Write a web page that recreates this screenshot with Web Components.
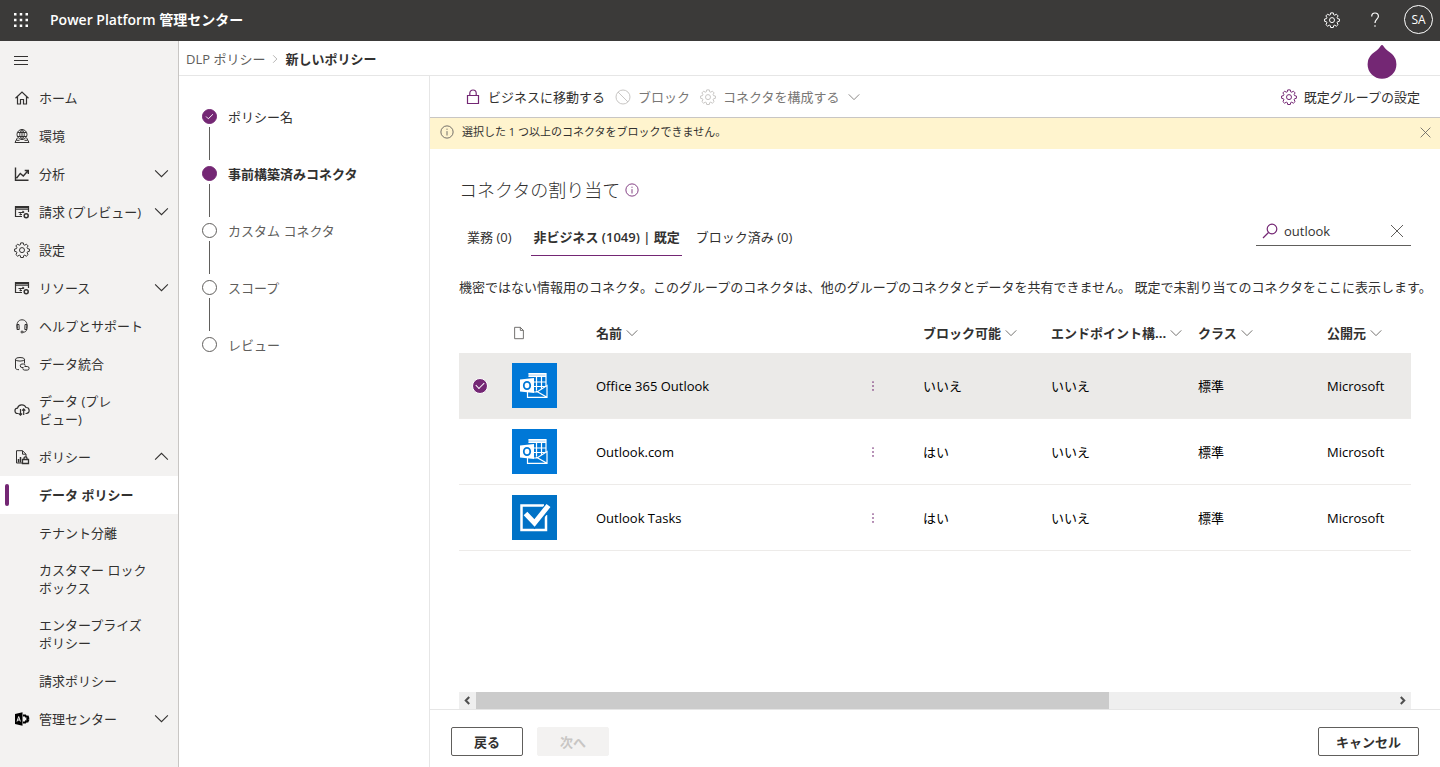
<!DOCTYPE html>
<html lang="ja">
<head>
<meta charset="utf-8">
<meta name="viewport" content="width=device-width, initial-scale=1">
<title>Power Platform 管理センター</title>
<style>
  html, body { margin: 0; height: 100%; }
  body {
    font: 13px/18px "Open Sans", "Noto Sans CJK JP", sans-serif;
    color: #323130; background: #fff;
    --accent: #742774; --dark: #3b3a39; --nav: #f3f2f1; --line: #e6e6e6;
  }
</style>
</head>
<body>
<admin-app></admin-app>
<script>
const ICONS = {
  waffle: '<g fill="currentColor" stroke="none"><path d="M1 1h2.500v2.500H1zM6.750 1h2.500v2.500h-2.500zM12.500 1H15v2.500h-2.500zM1 6.750h2.500v2.500H1zM6.750 6.750h2.500v2.500h-2.500zM12.500 6.750H15v2.500h-2.500zM1 12.500h2.500V15H1zM6.750 12.500h2.500V15h-2.500zM12.500 12.500H15V15h-2.500z"/></g>',
  menu: '<path d="M1 4.500h14M1 8.500h14M1 12.500h14"/>',
  home: '<path d="M1.500 8.300 8 2l6.500 6.300M3.500 6.800v7.200h3V9.500h3V14h3V6.800" stroke-width="1.200"/>',
  globe: '<circle cx="8" cy="6.500" r="5"/><path d="M8 1.500c-3 2.500-3 7.500 0 10M8 1.500c3 2.500 3 7.500 0 10M3.500 4.500h9M3.200 8.500h9.600M8 1.500v10M3.300 10 1 14.500h14L12.700 10M2.500 12.300h3M10.500 12.300h3"/>',
  chart: '<path d="M1.500 1.500v12.700h13M2.500 12.200l3.800-4.800 3 2.600L14 4.800M10.700 4.500h3.600v3.600" stroke-width="1.400"/>',
  panel: '<path d="M8 12.500H1.500v-10h13V8M1.500 5.200h13M1.500 3.500h13" stroke-width="1.200"/><path d="M4.500 8.500h5.500M8.500 7l1.600 1.500M8 10.500H5.500M6.500 9.300v2" stroke-width="1.200"/><circle cx="12.200" cy="11.800" r="2" stroke-width="1.500"/>',
  gear: '<path d="M6.700.900h2.600l.4 1.900 1 .4 1.700-1 1.700 1.700-1 1.700.4 1 1.900.4v2.300l-1.900.5-.4 1 1 1.700-1.700 1.700-1.700-1-1 .4-.4 1.900H6.700l-.4-1.900-1-.4-1.700 1-1.700-1.700 1-1.700-.4-1-1.900-.5V7l1.900-.4.4-1-1-1.700 1.700-1.700 1.700 1 1-.4z"/><circle cx="8" cy="8.100" r="2.500"/>',
  headset: '<path d="M3.500 10.500C2 5.500 4 1.800 8 1.800s6 3.700 4.500 8.700M5 6.500H3v5h2.200zM11 6.500h2v5h-2.200zM12.500 11.500c0 2-1.500 2.700-3.500 2.700"/><circle cx="8" cy="14" r="1"/>',
  database: '<ellipse cx="6" cy="3.300" rx="4.500" ry="1.800"/><path d="M1.500 3.300v8.900c0 .8 1.500 1.500 3.500 1.500M10.500 3.300V7.500M9.500 11.500H8a1.700 1.700 0 0 1 0-3.500h1.500a1.700 1.700 0 0 1 1.700 1.700M10.500 10.500h2.800a1.800 1.800 0 0 1 0 3.600h-2.800a1.800 1.800 0 0 1-1.700-1.800"/>',
  cloud: '<path d="M4.500 11.500H3.800a2.700 2.700 0 0 1-.3-5.400A4.600 4.600 0 0 1 12 5.500a3 3 0 0 1 .3 6h-.8M6.500 7v6M4.800 11.500l1.700 1.700 1.600-1.700M9.700 13V7M8.100 8.700 9.700 7l1.600 1.700" stroke-width="1.200"/>',
  policy: '<path d="M8 14H2.500V1.700h6L12 5.200V8M8.500 1.700v3.500H12"/><path d="M4.500 13.500V10M6.500 13.500V8" stroke-width="1.500"/><path d="M8.500 10.500h6v4h-6zM10 10.500V9.300a1.500 1.500 0 0 1 3 0v1.200" stroke-width="1.300"/>',
  admin: '<path d="M1 3l7.500-1.800v13.600L1 13z" fill="#000" stroke="none"/><path d="m3 10.500 1.700-5 1.700 5M3.600 9h2.200" stroke="#f3f2f1"/><path d="M9 4.500h2.300l.8 1.300 1.700-.2.500 1.500-1 .9 1 1-.7 1.400-1.500-.2-.8 1.300H9" stroke="#000" stroke-width="2"/>',
  down: '<path d="m2 5 6 6 6-6"/>',
  up: '<path d="m2 11 6-6 6 6"/>',
  right: '<path d="m5 2 6 6-6 6"/>',
  close: '<path d="m2 2 12 12M14 2 2 14"/>',
  help: '<path d="M4.700 4.500C4.700 2.300 6.200 1 8 1s3.400 1.200 3.400 3.300C11.400 7 8 7.500 8 11M8 13.300v1.400" stroke-width="1.200"/>',
  lock: '<path d="M2.500 6.500h11v8h-11zM4.800 6.500V4.200a3.200 3.200 0 0 1 6.400 0v2.300" stroke-width="1.200"/>',
  block: '<circle cx="8" cy="8" r="7"/><path d="m3 3 10 10"/>',
  info: '<circle cx="8" cy="8" r="7"/><path d="M8 7v5M8 4.200v1.300"/>',
  search: '<circle cx="10" cy="6" r="4.800" stroke-width="1.200"/><path d="M6.500 9.500 1 15" stroke-width="1.200"/>',
  page: '<path d="M3 1.500h6.500L13 5v9.500H3zM9.500 1.500V5H13"/>',
  more: '<path d="M7.500 3h1v1h-1zM7.500 7.500h1v1h-1zM7.500 12h1v1h-1z" stroke-width=".5" fill="currentColor"/>',
  check: '<path d="m3 8 3.300 3.300L13 4.700" stroke-width="1.400"/>',
  thumbleft: '<path d="M10.500 3 5.500 8l5 5" stroke-width="3"/>',
  thumbright: '<path d="m5.500 3 5 5-5 5" stroke-width="3"/>'
};

class BaseElement extends HTMLElement {
  constructor() { super(); this.attachShadow({ mode: 'open' }); }
  connectedCallback() {
    this.shadowRoot.innerHTML = `<style>
      * { box-sizing: border-box; }
      a { color: inherit; text-decoration: none; }
      button, input { font: inherit; color: inherit; margin: 0; padding: 0; border: 0; background: none; }
      ul, ol { list-style: none; margin: 0; padding: 0; }
      ${this.css()}</style>${this.html()}`;
  }
}
const attr = (el, name) => el.getAttribute(name) || '';

customElements.define('ui-icon', class extends BaseElement {
  css() { return `:host { display: inline-flex; flex: none; width: 16px; height: 16px; }
    svg { display: block; width: 100%; height: 100%; fill: none; stroke: currentColor; }`; }
  html() { return `<svg viewBox="0 0 16 16" aria-hidden="true">${ICONS[attr(this, 'name')]}</svg>`; }
});

customElements.define('app-header', class extends BaseElement {
  css() { return `
    :host { display: block; background: var(--dark); color: #fff; }
    header { display: flex; align-items: center; height: 41px; padding: 0 7px 2px 13px; }
    .waffle { display: flex; margin-right: 21px; }
    h1 { flex: 1; margin: 0; font-size: 14px; font-weight: 600; line-height: 20px; }
    .tools { display: flex; align-items: center; gap: 27px; }
    .tools button { display: flex; }
    .tools .me { width: 29px; height: 29px; margin-left: -6px; border: 1px solid #fff; border-radius: 50%;
      align-items: center; justify-content: center; font-size: 12px; }`; }
  html() { return `<header>
    <button class="waffle" aria-label="アプリ起動ツール"><ui-icon name="waffle"></ui-icon></button>
    <h1>Power Platform 管理センター</h1>
    <div class="tools">
      <button aria-label="設定"><ui-icon name="gear"></ui-icon></button>
      <button aria-label="ヘルプ"><ui-icon name="help"></ui-icon></button>
      <button class="me">SA</button>
    </div></header>`; }
});

customElements.define('nav-item', class extends BaseElement {
  css() { return `
    :host { display: block; }
    a { display: flex; align-items: center; min-height: 38px; padding: 9px 8px 10px 14px; position: relative; }
    .icon { width: 16px; margin-right: 9px; display: flex; }
    .label { flex: 1; white-space: nowrap; }
    .chev { width: 17px; height: 17px; }
    :host([current]) a { background: #fff; font-weight: 700; }
    :host([current]) a::before { content: ""; position: absolute; left: 5px; top: 8px; width: 4px; height: 22px;
      border-radius: 2px; background: var(--accent); }`; }
  html() {
    const i = attr(this, 'icon'), c = attr(this, 'chevron');
    return `<a href="#"><span class="icon">${i ? `<ui-icon name="${i}"></ui-icon>` : ''}</span>
      <span class="label"><slot></slot></span>${c ? `<ui-icon class="chev" name="${c}"></ui-icon>` : ''}</a>`;
  }
});

customElements.define('side-nav', class extends BaseElement {
  css() { return `
    :host { display: block; background: var(--nav); border-right: 1px solid #c8c6c4; }
    button { display: flex; align-items: center; height: 38px; padding-left: 13px; }`; }
  html() { return `<nav aria-label="メイン">
    <button aria-label="メニュー"><ui-icon name="menu"></ui-icon></button>
    <nav-item icon="home">ホーム</nav-item>
    <nav-item icon="globe">環境</nav-item>
    <nav-item icon="chart" chevron="down">分析</nav-item>
    <nav-item icon="panel" chevron="down">請求 (プレビュー)</nav-item>
    <nav-item icon="gear">設定</nav-item>
    <nav-item icon="panel" chevron="down">リソース</nav-item>
    <nav-item icon="headset">ヘルプとサポート</nav-item>
    <nav-item icon="database">データ統合</nav-item>
    <nav-item icon="cloud">データ (プレ<br>ビュー)</nav-item>
    <nav-item icon="policy" chevron="up">ポリシー</nav-item>
    <nav-item current>データ ポリシー</nav-item>
    <nav-item>テナント分離</nav-item>
    <nav-item>カスタマー ロック<br>ボックス</nav-item>
    <nav-item>エンタープライズ<br>ポリシー</nav-item>
    <nav-item>請求ポリシー</nav-item>
    <nav-item icon="admin" chevron="down">管理センター</nav-item></nav>`; }
});

customElements.define('crumb-bar', class extends BaseElement {
  css() { return `
    :host { display: block; border-bottom: 1px solid var(--line); position: relative; }
    nav { display: flex; align-items: center; gap: 5px; height: 34px; padding: 2px 7px 0; }
    a { color: #605e5c; }
    ui-icon { width: 10px; height: 10px; color: #8a8886; }
    strong { font-weight: 700; }
    svg { position: absolute; right: 43px; top: 4px; width: 30px; height: 35px; fill: var(--accent); z-index: 1; }`; }
  html() { return `<nav aria-label="階層"><a href="#">DLP ポリシー</a><ui-icon name="right"></ui-icon>
    <strong>新しいポリシー</strong></nav>
    <svg viewBox="0 0 30 35" aria-hidden="true"><path d="M15 0c1 0 2 2 3.500 3.700 2 2.200 4.500 3.300 6.500 5.300a14.400 14.400 0 1 1-20 0c2-2 4.500-3.100 6.500-5.300C13 2 14 0 15 0z"/></svg>`; }
});

customElements.define('wizard-step', class extends BaseElement {
  css() { return `
    :host { display: flex; height: 57px; color: #605e5c; }
    .track { display: flex; flex-direction: column; align-items: center; gap: 3px; width: 15px; margin-right: 11px; padding-top: 1px; }
    .dot { width: 15px; height: 15px; border-radius: 50%; border: 1px solid #605e5c; display: flex; flex: none;
      align-items: center; justify-content: center; color: #fff; }
    .dot ui-icon { width: 11px; height: 11px; }
    .line { width: 1px; height: 33px; background: #605e5c; }
    :host(:last-of-type) .line { display: none; }
    :host([state]) { color: #323130; }
    :host([state]) .dot { background: var(--accent); border-color: var(--accent); }
    :host([state=current]) .label { font-weight: 700; }`; }
  html() { return `<div class="track"><span class="dot">${attr(this, 'state') === 'done' ? '<ui-icon name="check"></ui-icon>' : ''}</span>
    <span class="line"></span></div><span class="label"><slot></slot></span>`; }
});

customElements.define('wizard-steps', class extends BaseElement {
  css() { return `:host { display: block; padding: 32px 23px; border-right: 1px solid var(--line); }`; }
  html() { return `<wizard-step state="done">ポリシー名</wizard-step>
    <wizard-step state="current">事前構築済みコネクタ</wizard-step>
    <wizard-step>カスタム コネクタ</wizard-step>
    <wizard-step>スコープ</wizard-step>
    <wizard-step>レビュー</wizard-step>`; }
});

customElements.define('command-bar', class extends BaseElement {
  css() { return `
    :host { display: flex; align-items: center; gap: 10px; height: 42px; padding: 0 20px 0 35px; border-bottom: 1px solid #c8c6c4; }
    button { display: flex; align-items: center; gap: 7px; white-space: nowrap; }
    ui-icon { width: 16px; height: 16px; }
    .on ui-icon { color: var(--accent); }
    button:disabled { color: #797775; }
    button:disabled ui-icon:first-child { color: #c8c6c4; }
    button .chev { width: 14px; height: 14px; }
    .end { margin-left: auto; }`; }
  html() { return `<button class="on"><ui-icon name="lock"></ui-icon>ビジネスに移動する</button>
    <button disabled><ui-icon name="block"></ui-icon>ブロック</button>
    <button disabled><ui-icon name="gear"></ui-icon>コネクタを構成する<ui-icon class="chev" name="down"></ui-icon></button>
    <button class="on end"><ui-icon name="gear"></ui-icon>既定グループの設定</button>`; }
});

customElements.define('message-bar', class extends BaseElement {
  css() { return `
    :host { display: flex; align-items: center; gap: 8px; height: 31px; padding: 0 8px 3px 10px; background: #fff4ce; font-size: 11px; }
    ui-icon { width: 14px; height: 14px; color: #605e5c; }
    span { flex: 1; }
    button { display: flex; }
    button ui-icon { width: 13px; height: 13px; }`; }
  html() { return `<ui-icon name="info"></ui-icon><span><slot></slot></span>
    <button aria-label="閉じる"><ui-icon name="close"></ui-icon></button>`; }
});

customElements.define('group-tabs', class extends BaseElement {
  css() { return `
    :host { display: flex; justify-content: space-between; align-items: flex-start; }
    .tabs { display: flex; gap: 12px; }
    .tabs button { height: 37px; padding: 0 2px; border-bottom: 1px solid transparent; white-space: nowrap; }
    .tabs button:first-child { padding: 0 8px; }
    .tabs button[aria-selected=true] { font-weight: 600; border-color: var(--accent); }
    label { display: flex; align-items: center; gap: 6px; width: 155px; height: 27px; padding: 0 6px 2px;
      border-bottom: 1px solid #605e5c; }
    label ui-icon { width: 16px; height: 16px; color: var(--accent); }
    input { flex: 1; min-width: 0; outline: 0; height: 20px; }
    label button { display: flex; }
    label button ui-icon { color: #605e5c; }`; }
  html() { return `<div class="tabs" role="tablist">
      <button role="tab">業務 (0)</button>
      <button role="tab" aria-selected="true">非ビジネス (1049) | 既定</button>
      <button role="tab">ブロック済み (0)</button></div>
    <label><ui-icon name="search"></ui-icon><input type="text" value="outlook" aria-label="検索">
      <button aria-label="クリア"><ui-icon name="close"></ui-icon></button></label>`; }
});

customElements.define('connector-logo', class extends BaseElement {
  css() { return `:host { display: block; width: 45px; height: 45px; } svg { display: block; width: 100%; height: 100%; }`; }
  html() {
    return attr(this, 'kind') === 'tasks'
      ? `<svg viewBox="0 0 45 45" aria-hidden="true"><path fill="#0072c6" d="M0 0h45v45H0z"/>
         <path fill="none" stroke="#fff" stroke-width="2.500" d="M32 10.500H9.500v24.500h24.500V20"/>
         <path fill="none" stroke="#0072c6" stroke-width="8" d="m14 18 8.500 10L38.500 9"/>
         <path fill="none" stroke="#fff" stroke-width="5" d="m13.500 18.500 9 9.500L36.500 10.500"/></svg>`
      : `<svg viewBox="0 0 45 45" aria-hidden="true"><path fill="#0078d7" d="M0 0h45v45H0z"/>
         <path fill="none" stroke="#fff" stroke-width="1.200" d="M16.500 10.700h17.500V24M16.500 13.500h17.500M22 19h12M22 23.500h12M24.500 14v13.500M29.500 14v12"/>
         <path fill="#fff" opacity=".8" d="M16.500 10.500h17.500v3H16.500z"/>
         <path fill="#0078d7" d="M35 22.500v12H15.500V28H26z"/>
         <path fill="none" stroke="#fff" stroke-width="1.200" d="M15.500 28v6.300h19.500V22.500L25 29H22M24 28l11 6.300"/>
         <path fill="#fff" d="M8 16.500 22 15v15L8 28.500z"/>
         <ellipse cx="15" cy="22.500" rx="3.200" ry="3.700" fill="none" stroke="#0078d7" stroke-width="1.800"/></svg>`;
  }
});

customElements.define('connector-table', class extends BaseElement {
  css() { return `
    :host { display: block; }
    table { width: 100%; table-layout: fixed; border-collapse: separate; border-spacing: 0; }
    th { height: 40px; padding: 0 0 0 10px; text-align: left; font-weight: 700; }
    .head { display: flex; align-items: center; gap: 3px; white-space: nowrap; }
    .head ui-icon { width: 14px; height: 14px; color: #605e5c; }
    td { height: 66px; padding: 0 0 0 10px; color: #000; border-bottom: 1px solid #edebe9; }
    .sel td { background: #ebeae8; }
    .more { display: flex; color: #323130; }
    .more ui-icon { width: 14px; height: 14px; }
    .more, .sel .more { color: var(--accent); }
    input { display: grid; place-items: center; appearance: none; width: 16px; height: 16px; margin-left: 3px; border-radius: 50%; opacity: 0; }
    input:checked { opacity: 1; background: var(--accent); border: 1px solid #fff; }
    input:checked::after { content: ""; width: 7px; height: 4px; margin-bottom: 2px; border: solid #fff; border-width: 0 0 1px 1px; transform: rotate(-45deg); }
    .c1 { width: 43px; } .c2 { width: 84px; } .c4 { width: 57px; } .c5 { width: 128px; } .c6 { width: 147px; } .c7 { width: 129px; } .c8 { width: 94px; }`; }
  html() {
    const h = t => `<th scope="col"><span class="head">${t}<ui-icon name="down"></ui-icon></span></th>`;
    const rows = [['outlook', 'Office 365 Outlook', 'いいえ', 1], ['outlook', 'Outlook.com', 'はい', 0], ['tasks', 'Outlook Tasks', 'はい', 0]];
    return `<table><colgroup><col class="c1"><col class="c2"><col><col class="c4"><col class="c5"><col class="c6"><col class="c7"><col class="c8"></colgroup>
      <thead><tr><th></th><th scope="col"><span class="head"><ui-icon name="page"></ui-icon></span></th>${h('名前')}<th></th>
      ${h('ブロック可能')}${h('エンドポイント構...')}${h('クラス')}${h('公開元')}</tr></thead>
      <tbody>${rows.map(([k, n, b, s]) => `<tr class="${s ? 'sel' : ''}">
        <td><input type="checkbox" aria-label="${n}" ${s ? 'checked' : ''}></td>
        <td><connector-logo kind="${k}"></connector-logo></td><td>${n}</td>
        <td><button class="more" aria-label="その他"><ui-icon name="more"></ui-icon></button></td>
        <td>${b}</td><td>いいえ</td><td>標準</td><td>Microsoft</td></tr>`).join('')}</tbody></table>`;
  }
});

customElements.define('scroll-strip', class extends BaseElement {
  css() { return `
    :host { display: grid; grid-template-columns: 17px 1fr 17px; height: 17px; background: #efefef; color: #505050; }
    button { display: flex; align-items: center; justify-content: center; }
    ui-icon { width: 11px; height: 11px; }
    .thumb { width: 69%; height: 17px; background: #cbcbcb; }`; }
  html() { return `<button aria-label="左へ"><ui-icon name="thumbleft"></ui-icon></button><div><div class="thumb"></div></div>
    <button aria-label="右へ"><ui-icon name="thumbright"></ui-icon></button>`; }
});

customElements.define('assign-panel', class extends BaseElement {
  css() { return `
    :host { display: flex; flex-direction: column; padding: 29px 29px 0; min-width: 0; }
    h2 { display: flex; align-items: center; gap: 5px; margin: 0 0 17px; font-size: 18px; font-weight: 300; line-height: 24px; }
    h2 ui-icon { width: 14px; height: 14px; color: var(--accent); }
    p { margin: 22px 0 17px; white-space: nowrap; }
    scroll-strip { margin-top: auto; }`; }
  html() { return `<h2>コネクタの割り当て<ui-icon name="info"></ui-icon></h2>
    <group-tabs></group-tabs>
    <p>機密ではない情報用のコネクタ。このグループのコネクタは、他のグループのコネクタとデータを共有できません。 既定で未割り当てのコネクタをここに表示します。</p>
    <connector-table></connector-table><scroll-strip></scroll-strip>`; }
});

customElements.define('wizard-footer', class extends BaseElement {
  css() { return `
    :host { display: flex; align-items: flex-start; gap: 14px; height: 58px; padding: 17px 21px 0; border-top: 1px solid var(--line); }
    button { min-width: 72px; height: 29px; border: 1px solid #605e5c; border-radius: 2px; font-weight: 700; }
    button:disabled { background: #f3f2f1; border-color: #f3f2f1; color: #c8c6c4; }
    .cancel { min-width: 101px; margin-left: auto; }`; }
  html() { return `<button>戻る</button><button disabled>次へ</button><button class="cancel">キャンセル</button>`; }
});

customElements.define('admin-app', class extends BaseElement {
  css() { return `
    :host { display: grid; grid-template-rows: auto 1fr; min-height: 100vh; }
    .body { display: grid; grid-template-columns: 179px minmax(0, 1fr); }
    .page { display: grid; grid-template-rows: auto 1fr; }
    .wizard { display: grid; grid-template-columns: 251px minmax(0, 1fr); }
    main { display: flex; flex-direction: column; min-width: 0; }
    assign-panel { flex: 1; }`; }
  html() { return `<app-header></app-header><div class="body"><side-nav></side-nav><div class="page"><crumb-bar></crumb-bar>
    <div class="wizard"><wizard-steps></wizard-steps><main><command-bar></command-bar>
    <message-bar>選択した 1 つ以上のコネクタをブロックできません。</message-bar>
    <assign-panel></assign-panel><wizard-footer></wizard-footer></main></div></div></div>`; }
});
</script>
</body>
</html>
